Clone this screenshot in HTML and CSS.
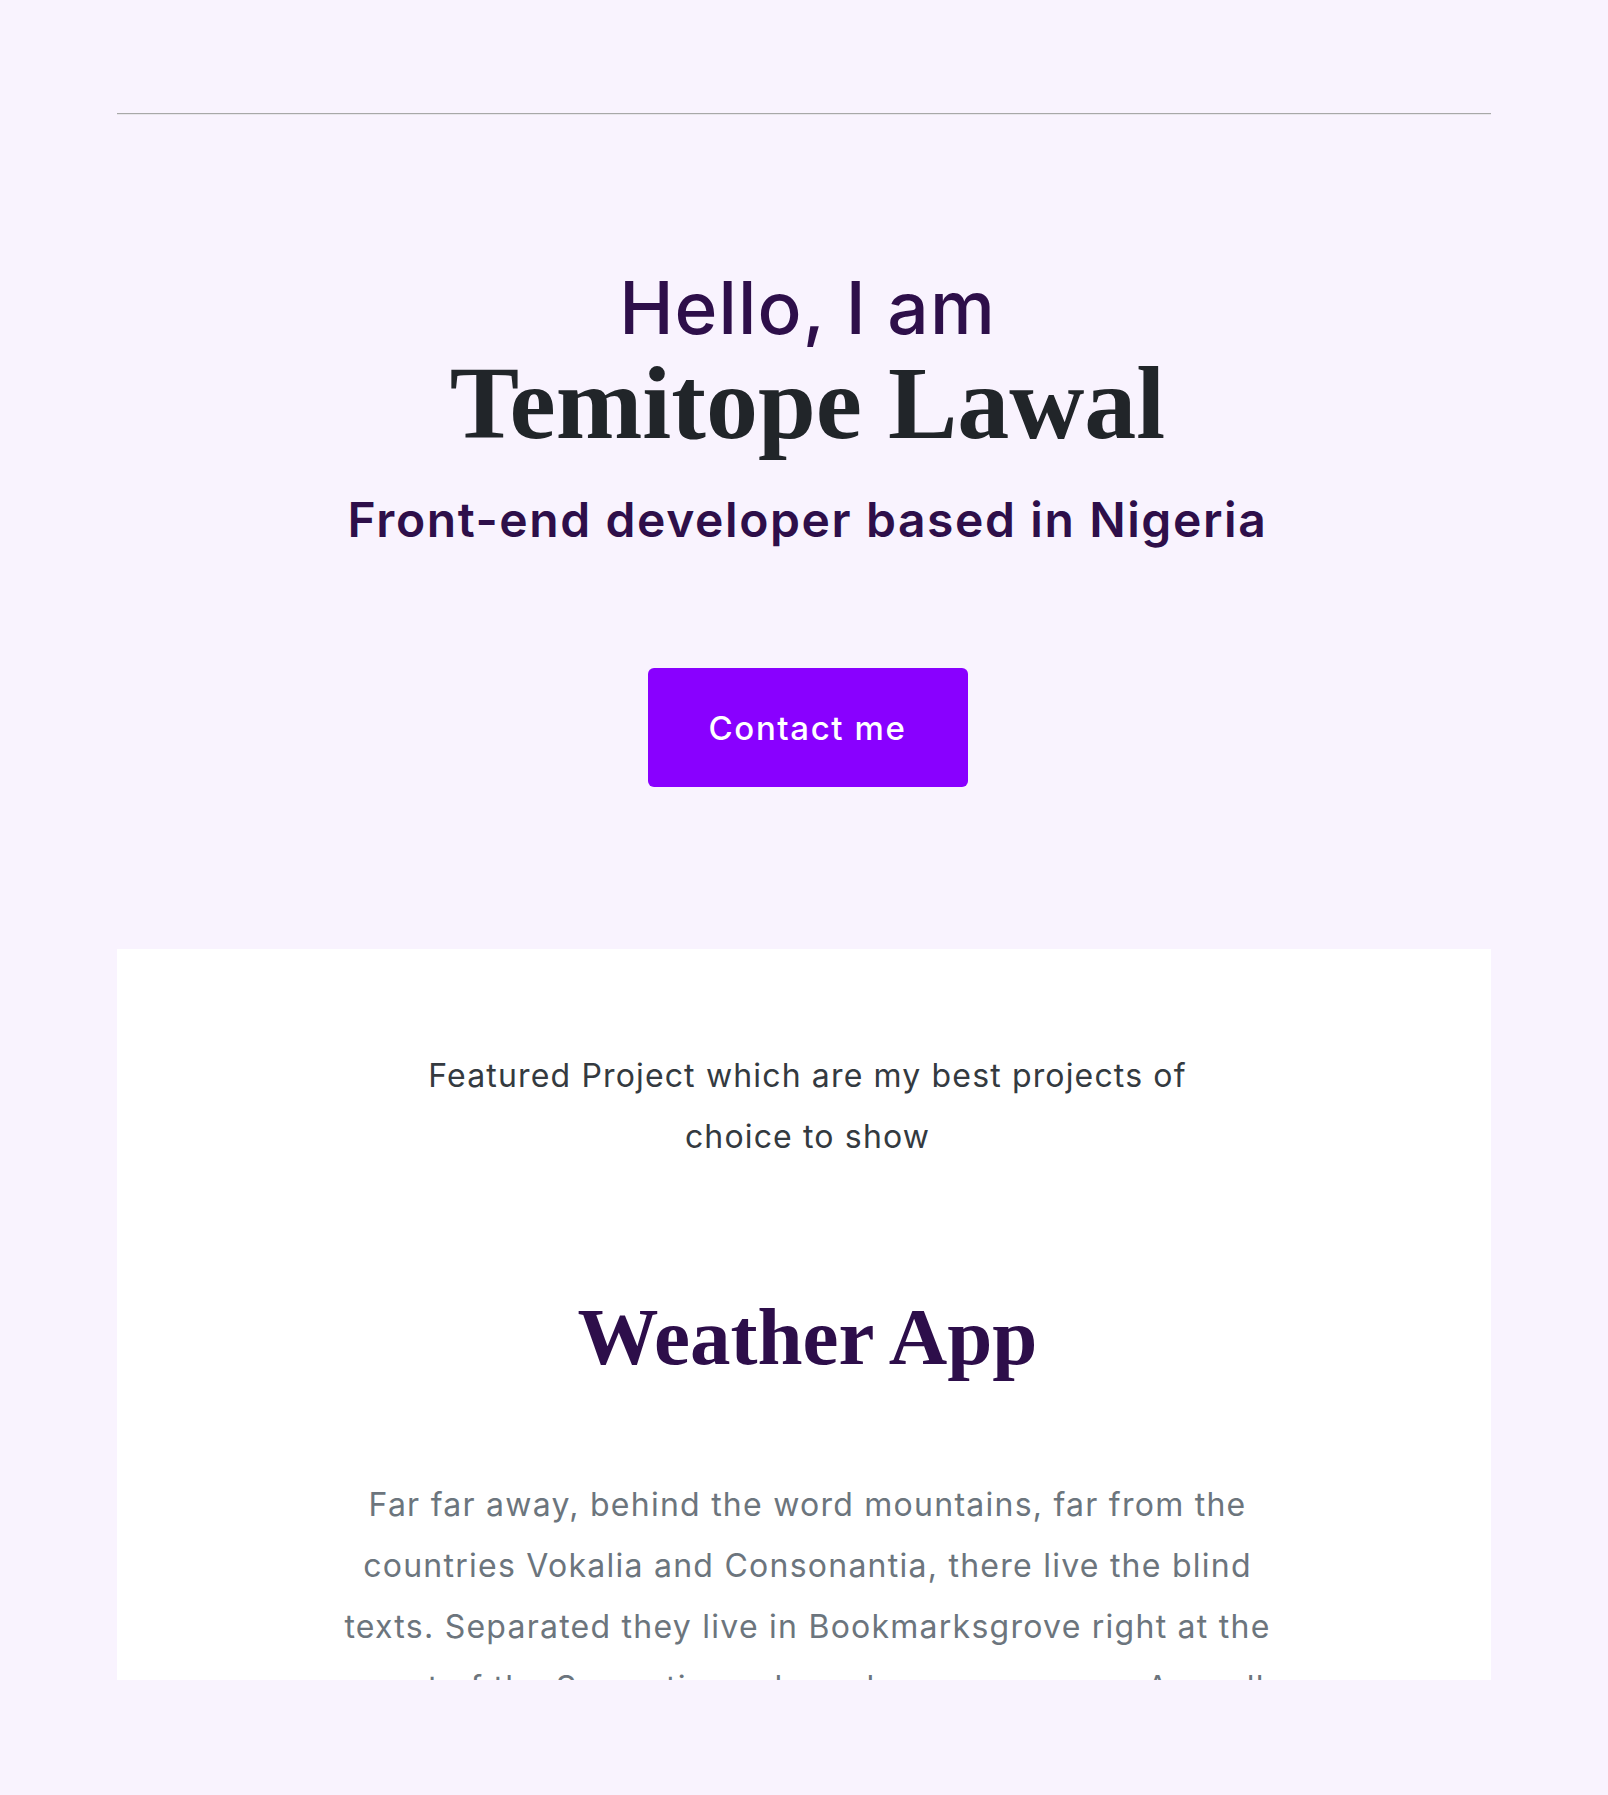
FILE: index.html
```html
<!DOCTYPE html>
<html lang="en">
<head>
<meta charset="utf-8">
<title>Temitope Lawal</title>
<link rel="stylesheet" href="styles.css">
</head>
<body>
<div class="page">
  <div class="rule"></div>
  <header class="hero">
    <h2 class="hello">Hello, I am</h2>
    <h1 class="name">Temitope Lawal</h1>
    <p class="role">Front-end developer based in Nigeria</p>
    <a class="btn" href="#contact">Contact me</a>
  </header>
  <section class="card">
    <p class="intro">Featured Project which are my best projects of choice to show</p>
    <h3 class="project-title">Weather App</h3>
    <p class="project-text">Far far away, behind the word mountains, far from the countries Vokalia and Consonantia, there live the blind texts. Separated they live in Bookmarksgrove right at the coast of the Semantics, a large language ocean. A small river named Duden flows by their place and supplies it with the necessary regelialia.</p>
  </section>
</div>
</body>
</html>
```
FILE: styles.css
```css
html, body {
  margin: 0;
  padding: 0;
}
body {
  background: #f9f3fe;
  font-family: Inter, "Noto Sans", sans-serif;
  height: 1795px;
  overflow: hidden;
}
.page {
  padding: 113px 117px 0 117px;
}
.rule {
  border-top: 1px solid #a8a8a8;
  border-bottom: 1px solid #e9e6ec;
}
.hero {
  display: flex;
  flex-direction: column;
  align-items: center;
  text-align: center;
  margin-top: 153px;
  padding-left: 7px;
}
.hello {
  margin: 0;
  font-size: 73px;
  line-height: 80px;
  font-weight: 500;
  color: #2e0f4a;
  letter-spacing: 1.1px;
}
.name {
  margin: 0;
  font-family: "Liberation Serif", serif;
  font-weight: 700;
  font-size: 104px;
  line-height: 110px;
  color: #212529;
}
.role {
  margin: 32px 0 0 0;
  font-size: 48px;
  line-height: 60px;
  font-weight: 600;
  color: #2e0f4a;
  letter-spacing: 1.6px;
}
.btn {
  margin-top: 118px;
  width: 320px;
  height: 119px;
  display: flex;
  align-items: center;
  justify-content: center;
  background: #8900ff;
  color: #ffffff;
  border-radius: 6px;
  text-decoration: none;
  font-size: 33px;
  font-weight: 500;
  letter-spacing: 1.6px;
}
.card {
  margin-top: 162px;
  background: #ffffff;
  height: 731px;
  overflow: hidden;
  display: flex;
  flex-direction: column;
  align-items: center;
  text-align: center;
  padding-top: 96px;
  padding-left: 7px;
  box-sizing: border-box;
}
.intro {
  margin: 0;
  max-width: 800px;
  font-size: 32px;
  line-height: 61px;
  color: #343a40;
  letter-spacing: 1.15px;
}
.project-title {
  margin: 125px 0 0 0;
  font-family: "Liberation Serif", serif;
  font-weight: 700;
  font-size: 81px;
  line-height: 90px;
  color: #2d0e4a;
}
.project-text {
  margin: 92px 0 0 0;
  max-width: 935px;
  font-size: 32px;
  line-height: 61px;
  color: #6c757d;
  letter-spacing: 1.25px;
}
```
